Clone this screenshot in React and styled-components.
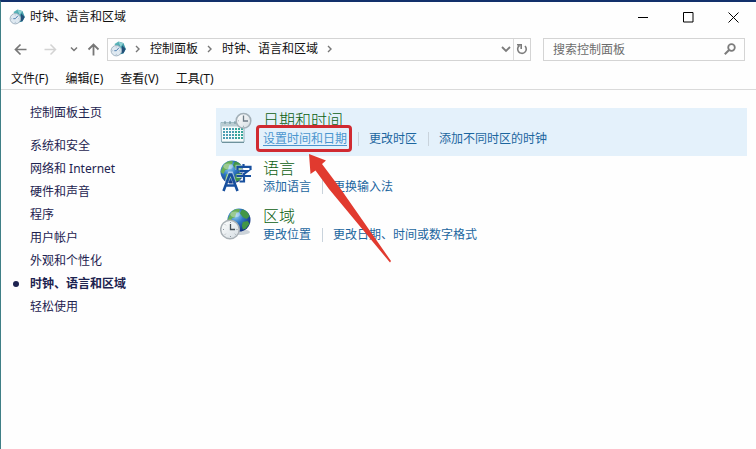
import React from 'react';
import styled, { createGlobalStyle } from 'styled-components';

const GlobalStyle = createGlobalStyle`
  *, *::before, *::after { box-sizing: border-box; }
  body {
    margin: 0;
    background: #fefefe;
    color: #111;
    font-family: "Noto Sans", "Noto Sans CJK SC", sans-serif;
    font-size: 12px;
    line-height: 18px;
  }
  button, input { font: inherit; color: inherit; }
  svg { display: block; flex: none; }
`;

const Window = styled.div`
  display: flex;
  flex-direction: column;
  min-height: 100vh;
  border-top: 2px solid #12306b;
  border-left: 1px solid #3f7f86;
`;

const TitleBar = styled.header`
  display: flex;
  align-items: center;
  height: 30px;
  padding-left: 8px;
`;

const Title = styled.h1`
  flex: 1;
  margin: 0 0 0 5px;
  font-size: 12px;
  font-weight: 400;
`;

const PlainButton = styled.button`
  display: flex;
  align-items: center;
  justify-content: center;
  padding: 0;
  border: 0;
  background: none;
`;

const WindowButton = styled(PlainButton)`
  width: 45px;
  height: 30px;
  color: #000;
`;

const NavBar = styled.div`
  display: flex;
  align-items: center;
  height: 34px;
  padding: 0 11px 0 7px;
  color: #666;
`;

const NavButton = styled(PlainButton)`
  width: ${(p) => p.$width}px;
  height: 24px;
  color: ${(p) => (p.disabled ? '#d3d3d3' : '#777')};
`;

const AddressBar = styled.nav`
  display: flex;
  flex: 1;
  align-items: center;
  height: 23px;
  margin-right: 12px;
  padding-left: 2px;
  border: 1px solid #d4d4d4;
  color: #777;
`;

const Crumb = styled.a`
  color: #111;
  text-decoration: none;
`;

const CrumbArrow = styled.svg`
  width: 24px;
  height: 10px;
`;

const Spacer = styled.div`
  flex: 1;
`;

const AddressButton = styled(PlainButton)`
  width: ${(p) => p.$width}px;
  height: 21px;
  border-left: ${(p) => (p.$divided ? '1px solid #dcdcdc' : '0')};
  color: #7c7c7c;
`;

const SearchBox = styled.form`
  display: flex;
  align-items: center;
  flex: 0 0 202px;
  min-width: 0;
  height: 23px;
  border: 1px solid #d4d4d4;
`;

const SearchInput = styled.input`
  flex: 1;
  min-width: 0;
  height: 21px;
  padding: 0 0 0 9px;
  border: 0;
  outline: 0;
  background: none;
  &::placeholder { color: #6c6c6c; opacity: 1; }
`;

const SearchButton = styled(PlainButton)`
  width: 28px;
  height: 21px;
  color: #7c7c7c;
`;

const MenuBar = styled.nav`
  display: flex;
  align-items: flex-start;
  gap: 17px;
  height: 24px;
  padding: 4px 0 0 10px;
  border-bottom: 1px solid #dadada;
`;

const MenuButton = styled(PlainButton)`
  color: #111;
`;

const Body = styled.div`
  display: flex;
  flex: 1;
`;

const Sidebar = styled.nav`
  flex: none;
  width: 215px;
  padding: 11px 0 0 12px;
`;

const CategoryList = styled.ul`
  margin: 10px 0 0;
  padding: 0;
  list-style: none;
`;

const SideLink = styled.a`
  display: flex;
  align-items: center;
  height: 23px;
  color: #1d2350;
  font-weight: ${(p) => (p.$current ? 700 : 400)};
  text-decoration: none;
  &::before {
    content: "";
    width: 6px;
    height: 6px;
    margin-right: 11px;
    border-radius: 50%;
    background: ${(p) => (p.$current ? '#1d2350' : 'transparent')};
  }
`;

const Main = styled.main`
  flex: 1;
  padding: 18px 9px 0 0;
`;

const Category = styled.section`
  display: flex;
  gap: 11px;
  height: 48px;
  padding: 4px 0 0 4px;
  background: ${(p) => (p.$active ? '#e4f1fb' : 'transparent')};
`;

const CategoryTitle = styled.h2`
  margin: 0 0 2px;
  color: #0c5f11;
  font-size: 16px;
  font-weight: 300;
  line-height: 16px;
`;

const Tasks = styled.ul`
  display: flex;
  margin: 0;
  padding: 0;
  list-style: none;
`;

const Task = styled.li`
  position: relative;
  display: flex;
  align-items: center;
  & + &::before {
    content: "";
    width: 1px;
    height: 14px;
    margin: 0 10px 0 11px;
    background: #c9d3dc;
  }
`;

const TaskLink = styled.a`
  color: ${(p) => (p.$hot ? '#4b96cf' : '#1c669f')};
  text-decoration: ${(p) => (p.$hot ? 'underline' : 'none')};
  text-underline-offset: 2px;
`;

const Highlight = styled.span`
  position: absolute;
  z-index: 1;
  inset: -5px -5px -4px -7px;
  border: 3px solid #d02a31;
  border-radius: 4px;
  pointer-events: none;
`;

const Pointer = styled.svg`
  position: absolute;
  z-index: 2;
  top: 24px;
  left: 46px;
  width: 84px;
  height: 110px;
  pointer-events: none;
`;

const Icon = ({ size = 16, children, ...rest }) => (
  <svg width={size} height={size} viewBox={`0 0 ${size} ${size}`} fill="none" stroke="currentColor" aria-hidden="true" {...rest}>
    {children}
  </svg>
);

const Gradients = () => (
  <defs>
    <radialGradient id="sea" cx="0.35" cy="0.3" r="0.75">
      <stop offset="0" stopColor="#9ad4f5" />
      <stop offset="0.45" stopColor="#2f78c4" />
      <stop offset="1" stopColor="#102e7c" />
    </radialGradient>
    <linearGradient id="dial" x1="0" y1="0" x2="1" y2="1">
      <stop offset="0" stopColor="#ffffff" />
      <stop offset="1" stopColor="#d5dde2" />
    </linearGradient>
    <linearGradient id="teal" x1="0" y1="0" x2="1" y2="1">
      <stop offset="0" stopColor="#67bfc0" />
      <stop offset="1" stopColor="#247f94" />
    </linearGradient>
  </defs>
);

const AppIcon = () => (
  <Icon stroke="none">
    <Gradients />
    <path d="M4.500 3 8.500.5l5 1.500L15.800 8l-2.300 4.500-4 1z" fill="url(#teal)" />
    <path d="M8.500.8 13.300 2.300 10.500 6z" fill="#8fd0d3" />
    <path d="m12 4.500 3.700 3.500-2.200 4-2 .5z" fill="#244f79" />
    <circle cx="6.300" cy="9.700" r="5.200" fill="#dfe9f1" stroke="#a3b4c2" />
    <path d="M6.300 9.700 9 6.700M6.300 9.700H4.300" stroke="#4f7fb0" />
    <path d="M6.300 5.700v.7M6.300 12.900v.7M2.500 9.700h.6M9.500 9.700h.6" stroke="#8fabc4" />
  </Icon>
);

const CalendarIcon = () => (
  <Icon size={32} stroke="none">
    <path d="M1 10.500h23V30H1.500z" fill="#f7fbfb" stroke="#8eb0ba" />
    <path d="M1.500 10.500h22.500v4H1.500z" fill="#b9ccd2" />
    <path d="M5 9v3M10 9v3M15 9v3" stroke="#6d8f99" />
    {[16, 19, 22, 25].map((y) =>
      [3, 6, 9, 12, 15, 18, 21].map((x) => (
        <rect key={`${x}-${y}`} x={x} y={y} width="2" height="2" fill={x > 12 ? '#37a59a' : '#4c9eb2'} />
      ))
    )}
    <path d="M2 30.500h22" stroke="#6e929c" />
    <circle cx="23.500" cy="8.800" r="7.300" fill="url(#dial)" stroke="#a3b0b8" strokeWidth="1.500" />
    <path d="M23.500 3.500v5.500h4.500" stroke="#6d7b86" strokeWidth="1.300" />
    <path d="M17.800 8.800h1M23.500 13.800v1" stroke="#96a4ad" />
  </Icon>
);

const Globe = ({ cx, cy, r }) => (
  <g transform={`translate(${cx} ${cy}) scale(${r / 12})`} stroke="none">
    <circle r="12" fill="url(#sea)" />
    <path d="M-9-7C-6-11-2-12 1-11l-1 3-3 1-1 4-3 1-2 4-3-2z" fill="#67ae57" />
    <path d="M3-11c4 0 7 4 8 7l-3 3-4-2-3-4zM4 2l5-1 2 3-4 5-3 1-1-4z" fill="#429647" />
    <path d="M-6 2l4 1 1 3-3 4-3-2z" fill="#5ba851" />
    <ellipse cx="-4" cy="-6" rx="5" ry="3" fill="#fff" opacity="0.35" />
  </g>
);

const LanguageIcon = () => (
  <Icon size={32}>
    <Globe cx={12} cy={12} r={11.5} />
    <g stroke="#fff" strokeWidth="4" opacity="0.55">
      <path d="m3.500 31 6.200-17.500h1.600L17.500 31M17.500 10V6.800h13V10M19.500 11h8.300L24 14v7.500h-4.500M16.500 16H31" />
    </g>
    <path d="m3.500 31 6.200-16.500h1.600L17.500 31M6 25.500h9.500" stroke="#174f9e" strokeWidth="2.600" />
    <path d="M17.500 10V6.800h13V10M23.500 4v2.500M19.500 11h8.300L24 14v7.500h-4.500M16.500 16H31" stroke="#174f9e" strokeWidth="2.200" />
  </Icon>
);

const RegionIcon = () => (
  <Icon size={32}>
    <ellipse cx="20" cy="24" rx="10" ry="3" fill="#9aa7b4" stroke="none" opacity="0.5" />
    <Globe cx={19} cy={12} r={11.5} />
    <circle cx="10" cy="21.500" r="9.300" fill="url(#dial)" stroke="#aab1b6" strokeWidth="1.500" />
    <path d="M10.500 16v5.500H15" stroke="#454f58" strokeWidth="1.300" />
    <path d="M10.500 14v1M10.500 28v1M3 21.500h1M16.500 21.500h1M5 16.500l.7.700M15.500 26.500l-.7-.7M5 26.500l.7-.7" stroke="#8c979f" />
  </Icon>
);

const Chevron = () => (
  <CrumbArrow viewBox="0 0 24 10" fill="none" stroke="currentColor" strokeWidth="1.400" aria-hidden="true">
    <path d="m10 2 3 3-3 3" />
  </CrumbArrow>
);

const sideItems = ['系统和安全', '网络和 Internet', '硬件和声音', '程序', '用户帐户', '外观和个性化', '时钟、语言和区域', '轻松使用'];

const categories = [
  { title: '日期和时间', icon: <CalendarIcon />, active: true, tasks: ['设置时间和日期', '更改时区', '添加不同时区的时钟'] },
  { title: '语言', icon: <LanguageIcon />, tasks: ['添加语言', '更换输入法'] },
  { title: '区域', icon: <RegionIcon />, tasks: ['更改位置', '更改日期、时间或数字格式'] },
];

export default function App() {
  return (
    <>
      <GlobalStyle />
      <Window>
        <TitleBar>
          <AppIcon />
          <Title>时钟、语言和区域</Title>
          <WindowButton type="button" aria-label="最小化">
            <Icon size={11}><path d="M0 5.500h10" /></Icon>
          </WindowButton>
          <WindowButton type="button" aria-label="最大化">
            <Icon size={11}><path d="M.5.500h9.500v9.500H.5z" /></Icon>
          </WindowButton>
          <WindowButton type="button" aria-label="关闭">
            <Icon size={11}><path d="m.5.500 10 10M10.500.500l-10 10" /></Icon>
          </WindowButton>
        </TitleBar>

        <NavBar>
          <NavButton type="button" $width={24} aria-label="后退">
            <Icon size={13} strokeWidth="1.700"><path d="M12.500 6.500H1.500M6.500 1.500l-5 5 5 5" /></Icon>
          </NavButton>
          <NavButton type="button" $width={36} disabled aria-label="前进">
            <Icon size={13} strokeWidth="1.500"><path d="M.5 6.500h11M6.500 1.500l5 5-5 5" /></Icon>
          </NavButton>
          <NavButton type="button" $width={11} aria-label="最近浏览的位置">
            <Icon size={8} strokeWidth="1.500"><path d="m1 2.500 3 3 3-3" /></Icon>
          </NavButton>
          <NavButton type="button" $width={28} aria-label="上移">
            <Icon size={13} strokeWidth="1.800"><path d="M6.500 12.500v-11M1.500 6.500l5-5 5 5" /></Icon>
          </NavButton>
          <AddressBar aria-label="地址">
            <AppIcon />
            <Chevron />
            <Crumb href="#panel">控制面板</Crumb>
            <Chevron />
            <Crumb href="#region">时钟、语言和区域</Crumb>
            <Chevron />
            <Spacer />
            <AddressButton type="button" $width={15} aria-label="历史记录">
              <Icon size={10} strokeWidth="1.800"><path d="m1 3 4 4 4-4" /></Icon>
            </AddressButton>
            <AddressButton type="button" $width={17} $divided aria-label="刷新">
              <Icon size={12} strokeWidth="1.600">
                <path d="M3.500 2.500a4.300 4.300 0 1 0 5.500.500M1 1.800h4.200V6" />
              </Icon>
            </AddressButton>
          </AddressBar>
          <SearchBox role="search">
            <SearchInput type="text" placeholder="搜索控制面板" aria-label="搜索控制面板" />
            <SearchButton type="button" aria-label="搜索">
              <Icon size={12}>
                <circle cx="7.500" cy="4.500" r="3.300" strokeWidth="1.800" />
                <path d="M5 7 .8 11.200" strokeWidth="2" />
              </Icon>
            </SearchButton>
          </SearchBox>
        </NavBar>

        <MenuBar>
          {['文件(F)', '编辑(E)', '查看(V)', '工具(T)'].map((label) => (
            <MenuButton type="button" key={label}>{label}</MenuButton>
          ))}
        </MenuBar>

        <Body>
          <Sidebar>
            <SideLink href="#home">控制面板主页</SideLink>
            <CategoryList>
              {sideItems.map((item, i) => (
                <li key={item}>
                  <SideLink href={`#category-${i}`} $current={i === 6}>{item}</SideLink>
                </li>
              ))}
            </CategoryList>
          </Sidebar>
          <Main>
            {categories.map((category) => (
              <Category key={category.title} $active={category.active}>
                {category.icon}
                <div>
                  <CategoryTitle>{category.title}</CategoryTitle>
                  <Tasks>
                    {category.tasks.map((task, i) => (
                      <Task key={task}>
                        <TaskLink href={`#${task}`} $hot={category.active && i === 0}>{task}</TaskLink>
                        {category.active && i === 0 && (
                          <>
                            <Highlight />
                            <Pointer viewBox="0 0 84 110" fill="#e13a2f" aria-hidden="true">
                              <path d="M0 0 17 6.500l-4 3.500L31 34 82 107l-1 1.500L20 35 6.500 16.500 1.500 20z" />
                            </Pointer>
                          </>
                        )}
                      </Task>
                    ))}
                  </Tasks>
                </div>
              </Category>
            ))}
          </Main>
        </Body>
      </Window>
    </>
  );
}
